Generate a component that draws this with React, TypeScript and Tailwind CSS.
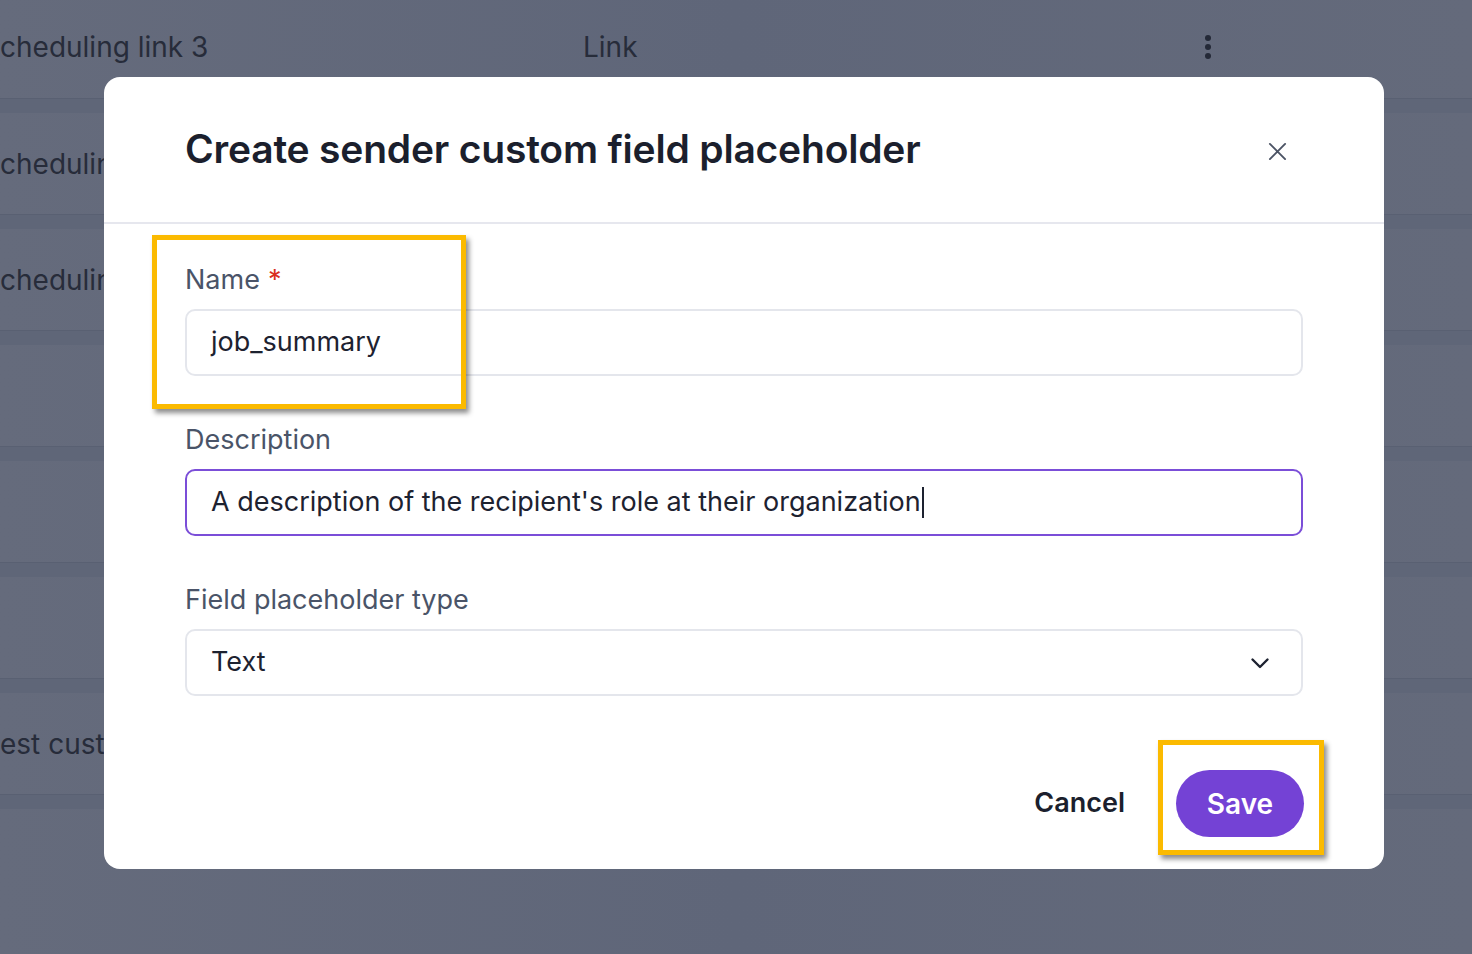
import React from "react";

const font = { fontFamily: "Inter, 'Noto Sans', sans-serif" };

function BgRow({ first, label, kind, dots }: { first?: boolean; label?: string; kind?: string; dots?: boolean }) {
  return (
    <div className={`${first ? "h-[98px] pb-[5px]" : "h-[101px]"} flex items-center text-[28px] text-[#272c3a] shrink-0`}>
      <div className="w-[583px] shrink-0 whitespace-nowrap">{label}</div>
      <div className="w-[620px] shrink-0">{kind}</div>
      {dots && (
        <svg width="10" height="26" viewBox="0 0 10 26">
          <circle cx="5" cy="4" r="3" fill="#242937" />
          <circle cx="5" cy="13" r="3" fill="#242937" />
          <circle cx="5" cy="22" r="3" fill="#242937" />
        </svg>
      )}
    </div>
  );
}

function Band() {
  return <div className="h-[15px] shrink-0 bg-[#5f6678] border-t border-[#596072]" />;
}

function Field({ label, required, value, focused, select }: { label: string; required?: boolean; value: string; focused?: boolean; select?: boolean }) {
  return (
    <div className="flex flex-col">
      <label className="text-[27px] leading-[32px] text-[#4a5468]">
        {label}
        {required && <span className="text-[#d92d20] ml-[8px]">*</span>}
      </label>
      <div
        className={`mt-[13px] h-[67px] rounded-[10px] border-2 flex items-center pl-[24px] pr-[31px] text-[27px] text-[#1d2230] ${
          focused ? "border-[#7b4ed8]" : "border-[#e4e6ec]"
        }`}
      >
        <span className="whitespace-nowrap">{value}</span>
        {focused && <span className="w-[2px] h-[31px] bg-[#1d2230] ml-[1px]" />}
        {select && (
          <svg width="20" height="12" viewBox="0 0 20 12" className="ml-auto">
            <path d="M2.5 2.5l7.5 7.5 7.5-7.5" fill="none" stroke="#1d2230" strokeWidth="2.4" strokeLinecap="round" strokeLinejoin="round" />
          </svg>
        )}
      </div>
    </div>
  );
}

export default function App() {
  return (
    <div className="relative w-full h-[954px] overflow-hidden bg-gradient-to-r from-[#656b7c] via-[#5f6679] to-[#646a7b]" style={font}>
      {/* page behind the backdrop */}
      <div className="flex flex-col">
        <BgRow first label="cheduling link 3" kind="Link" dots />
        <Band />
        <BgRow label="cheduling" />
        <Band />
        <BgRow label="cheduling" />
        <Band />
        <BgRow />
        <Band />
        <BgRow />
        <Band />
        <BgRow />
        <Band />
        <BgRow label="est custom" />
        <Band />
      </div>

      {/* modal */}
      <div className="absolute left-[104px] top-[77px] w-[1280px] h-[792px] bg-white rounded-[16px] flex flex-col">
        <div className="h-[147px] shrink-0 flex items-center justify-between pl-[81px] pr-[97px] border-b-2 border-[#e6e7ee]">
          <h2 className="text-[39px] font-semibold text-[#1b1f2d] tracking-[-0.2px]">Create sender custom field placeholder</h2>
          <svg width="19" height="19" viewBox="0 0 20 20" className="mt-[4px]">
            <path d="M2 2l16 16M18 2L2 18" stroke="#4b5364" strokeWidth="2" strokeLinecap="round" />
          </svg>
        </div>
        <div className="flex flex-col gap-[48px] px-[81px] pt-[40px]">
          <Field label="Name" required value="job_summary" />
          <Field label="Description" value="A description of the recipient's role at their organization" focused />
          <Field label="Field placeholder type" value="Text" select />
        </div>
        <div className="flex items-center justify-end gap-[51px] pr-[80px] mt-[74px]">
          <button className="text-[27px] font-semibold text-[#1b1f2d]">Cancel</button>
          <button className="w-[128px] h-[67px] rounded-full bg-[#7442d5] text-white text-[28px] font-semibold">Save</button>
        </div>
      </div>

      {/* highlight annotations */}
      <div className="absolute left-[152px] top-[235px] w-[314px] h-[174px] border-[5px] border-[#fbba00] shadow-[3px_4px_5px_rgba(0,0,0,0.45)]" />
      <div className="absolute left-[1158px] top-[740px] w-[166px] h-[115px] border-[5px] border-[#fbba00] shadow-[3px_4px_5px_rgba(0,0,0,0.45)]" />
    </div>
  );
}
